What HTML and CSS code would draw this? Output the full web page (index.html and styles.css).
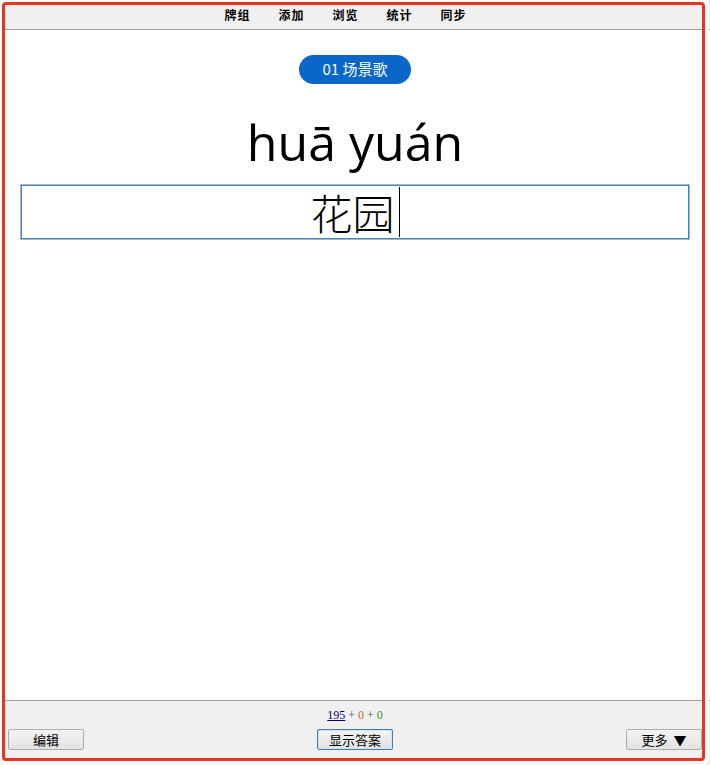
FILE: index.html
```html
<!DOCTYPE html>
<html lang="zh">
<head>
    <meta charset="UTF-8">
    <meta name="viewport" content="width=device-width, initial-scale=1.0">
    <title>Anki - 复习</title>
    <link rel="stylesheet" href="styles.css">
</head>
<body>
    <header class="toolbar">
        <nav class="menu">
            <a href="#">牌组</a>
            <a href="#">添加</a>
            <a href="#">浏览</a>
            <a href="#">统计</a>
            <a href="#">同步</a>
        </nav>
    </header>

    <main class="card">
        <div class="deck-tag">01 场景歌</div>
        <div class="pinyin">huā yuán</div>
        <div class="answer-box">花园<span class="caret"></span></div>
    </main>

    <footer class="bottombar">
        <div class="counts">
            <a href="#" class="new-count">195</a> + <span class="learn-count">0</span> + <span class="review-count">0</span>
        </div>
        <div class="buttons">
            <button class="btn">编辑</button>
            <button class="btn btn-default">显示答案</button>
            <button class="btn">更多 <span class="arrow">▼</span></button>
        </div>
    </footer>

    <!-- highlight frame drawn over the whole window -->
    <div class="frame"></div>
</body>
</html>
```

FILE: styles.css
```css
html, body {
    height: 100%;
}

body {
    margin: 0;
    padding: 0;
    display: flex;
    flex-direction: column;
    background: #ffffff;
    color: #000000;
    font-family: "Noto Sans", "Noto Sans CJK SC", sans-serif;
}

.toolbar {
    height: 29px;
    background: #f0f0f0;
    border-bottom: 1px solid #a0a0a0;
    display: flex;
    align-items: center;
    justify-content: center;
}

.menu {
    display: flex;
    gap: 28px;
    margin-right: 19px;
}

.menu a {
    font-family: "Noto Sans CJK SC", sans-serif;
    font-size: 12px;
    font-weight: bold;
    color: #000000;
    text-decoration: none;
    letter-spacing: 1px;
}

.card {
    flex: 1;
    display: flex;
    flex-direction: column;
    align-items: center;
    padding: 25px 20px 0;
}

.deck-tag {
    height: 29px;
    line-height: 28px;
    padding: 0 23px;
    border-radius: 15px;
    background: #0a66c8;
    color: #ffffff;
    font-family: "Noto Sans CJK SC", sans-serif;
    font-size: 15px;
}

.pinyin {
    margin-top: 28px;
    font-family: "Open Sans", "Noto Sans", sans-serif;
    font-size: 50px;
    line-height: 60px;
}

.answer-box {
    margin-top: 12px;
    box-sizing: border-box;
    width: 100%;
    height: 56px;
    border: 2px solid #4a82b8;
    outline: 1px solid #9fb8d0;
    outline-offset: -1px;
    text-align: center;
    font-family: "Noto Sans CJK SC", serif;
    font-size: 42px;
    font-weight: 300;
    line-height: 52px;
}

.caret {
    display: inline-block;
    width: 1px;
    height: 50px;
    margin: 1px 0 0 4px;
    background: #000000;
    vertical-align: top;
}

.bottombar {
    height: 65px;
    background: #f0f0f0;
    border-top: 1px solid #a0a0a0;
    box-sizing: border-box;
    padding-top: 7px;
}

.counts {
    text-align: center;
    font-family: "Liberation Serif", serif;
    font-size: 12px;
    line-height: 15px;
    color: #555555;
}

.new-count {
    color: #000080;
}

.learn-count {
    color: #c86428;
}

.review-count {
    color: #2aa02a;
}

.buttons {
    display: flex;
    justify-content: space-between;
    padding: 0 8px;
    margin-top: 6px;
}

.btn {
    width: 76px;
    height: 21px;
    padding: 0;
    border: 1px solid #adadad;
    border-radius: 2px;
    background: linear-gradient(#f4f4f4, #e2e2e2);
    font-family: "Noto Sans CJK SC", sans-serif;
    font-size: 13px;
    color: #000000;
}

.btn .arrow {
    margin-left: 3px;
}

.btn-default {
    border-color: #3c7fb1;
    box-shadow: inset 0 0 0 1px #cfe3f3;
}

.frame {
    position: fixed;
    left: 2px;
    top: 2px;
    right: 5px;
    bottom: 4px;
    border: 3px solid #ea3323;
    border-radius: 4px;
    box-shadow: 0 0 0 4px #ffffff;
    pointer-events: none;
}
```
